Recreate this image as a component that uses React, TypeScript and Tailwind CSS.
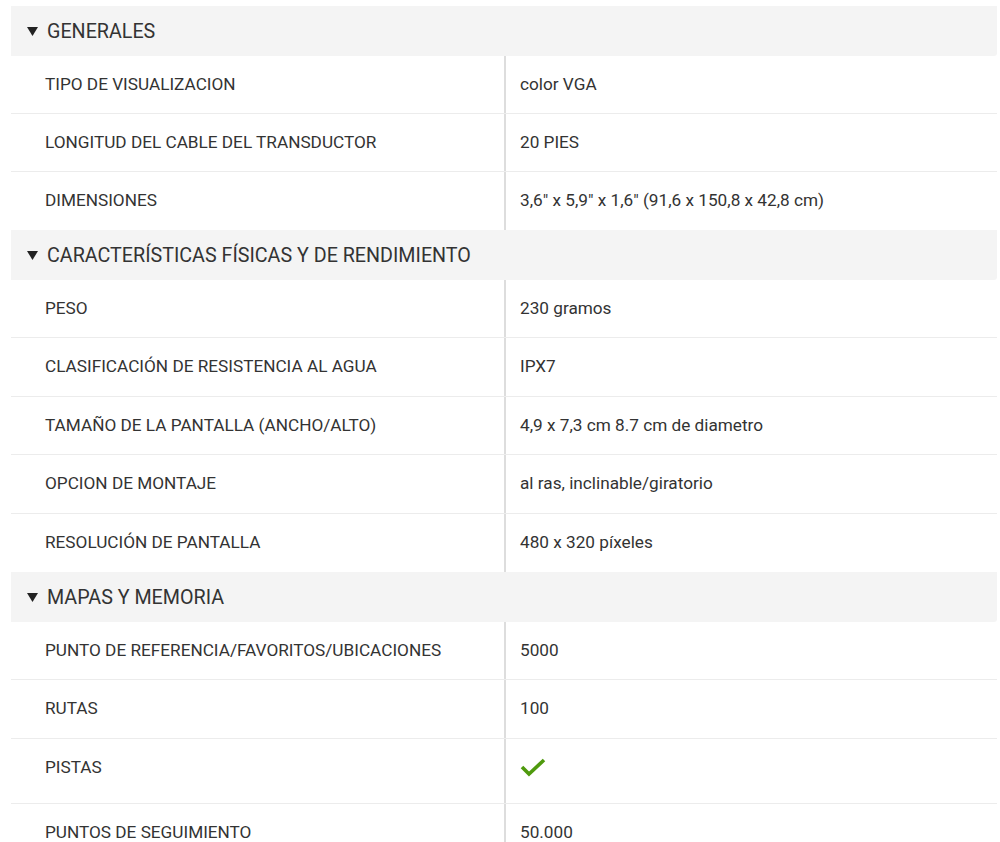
import React from "react";

type Row = { label: string; value: React.ReactNode; tall?: boolean };
type Section = { title: string; rows: Row[] };

const Check = () => (
  <svg width="26" height="20" viewBox="0 0 26 20" className="mt-[0px]">
    <polyline
      points="2,10 9,17 24,3"
      fill="none"
      stroke="#4f9a0e"
      strokeWidth="3.6"
      strokeLinecap="butt"
      strokeLinejoin="miter"
    />
  </svg>
);

const sections: Section[] = [
  {
    title: "GENERALES",
    rows: [
      { label: "TIPO DE VISUALIZACION", value: "color VGA" },
      { label: "LONGITUD DEL CABLE DEL TRANSDUCTOR", value: "20 PIES" },
      { label: "DIMENSIONES", value: '3,6" x 5,9" x 1,6" (91,6 x 150,8 x 42,8 cm)' },
    ],
  },
  {
    title: "CARACTERÍSTICAS FÍSICAS Y DE RENDIMIENTO",
    rows: [
      { label: "PESO", value: "230 gramos" },
      { label: "CLASIFICACIÓN DE RESISTENCIA AL AGUA", value: "IPX7" },
      { label: "TAMAÑO DE LA PANTALLA (ANCHO/ALTO)", value: "4,9 x 7,3 cm 8.7 cm de diametro" },
      { label: "OPCION DE MONTAJE", value: "al ras, inclinable/giratorio" },
      { label: "RESOLUCIÓN DE PANTALLA", value: "480 x 320 píxeles" },
    ],
  },
  {
    title: "MAPAS Y MEMORIA",
    rows: [
      { label: "PUNTO DE REFERENCIA/FAVORITOS/UBICACIONES", value: "5000" },
      { label: "RUTAS", value: "100" },
      { label: "PISTAS", value: <Check />, tall: true },
      { label: "PUNTOS DE SEGUIMIENTO", value: "50.000" },
    ],
  },
];

export default function App() {
  return (
    <div
      className="w-[1000px] h-[842px] overflow-hidden bg-white pt-[6px] pl-[11px] pr-[3px] text-[#333333]"
      style={{ fontFamily: "Roboto, 'Noto Sans', sans-serif" }}
    >
      {sections.map((s, si) => (
        <div key={si} className="flex flex-col">
          <div className="flex h-[50px] items-center bg-[#f4f4f4] pl-[16px] rounded-br-[3px]">
            <svg width="11" height="9" viewBox="0 0 11 9" className="mr-[9px] mt-[1px]">
              <polygon points="0,0 11,0 5.5,9" fill="#222222" />
            </svg>
            <span className="text-[19.7px] leading-none pt-[1px]">{s.title}</span>
          </div>
          {s.rows.map((r, ri) => (
            <div
              key={ri}
              className={`flex ${ri < s.rows.length - 1 ? "border-b border-[#ececec]" : ""} ${
                r.tall ? "h-[65px]" : si === 0 ? "h-[58px]" : "h-[58.4px]"
              }`}
            >
              <div className="w-[493px] shrink-0 pl-[34px] pt-[18px] text-[17.2px] leading-[21px]">
                {r.label}
              </div>
              <div className="w-[2px] shrink-0 bg-[#dddddd]" />
              <div className="flex-1 pl-[14px] pt-[18px] text-[17.2px] leading-[21px]">{r.value}</div>
            </div>
          ))}
        </div>
      ))}
    </div>
  );
}
